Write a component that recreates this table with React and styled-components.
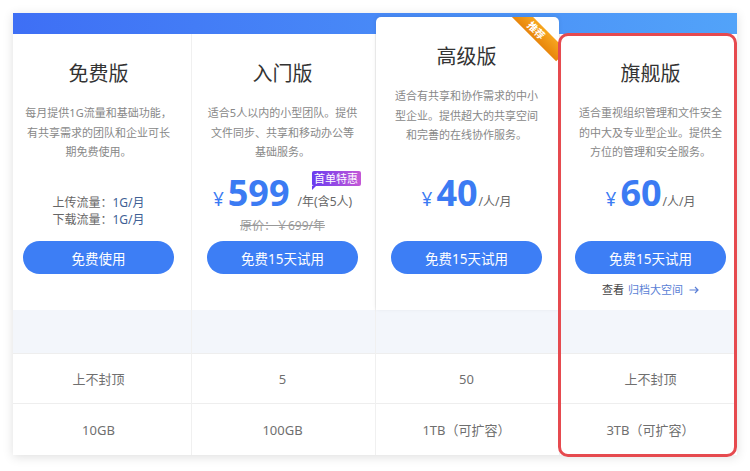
import React from "react";
import styled, { createGlobalStyle, css } from "styled-components";

const Global = createGlobalStyle`
  html, body { margin: 0; padding: 0; background: #fff; }
  body { font-family: "Noto Sans", "Noto Sans CJK SC", sans-serif; }
  * { box-sizing: border-box; }
`;

const Page = styled.div`
  padding: 13px;
`;

const Card = styled.div`
  width: 724px;
  background: #fff;
  box-shadow: 0 2px 10px rgba(0, 0, 0, 0.13);
`;

const TopBar = styled.div`
  height: 21px;
  background: linear-gradient(90deg, #3e6ff5, #52a3f9);
`;

const Grid = styled.div`
  display: grid;
  grid-template-columns: 178px 184px 184px 178px;
`;

const Column = styled.div`
  --pl: ${(p) => p.$pl}px;
  --pr: ${(p) => p.$pr}px;
  display: flex;
  flex-direction: column;
  position: relative;
  & + & {
    border-left: 1px solid #f0f0f0;
  }
  ${(p) =>
    p.$highlight &&
    css`
      &::after {
        content: "";
        position: absolute;
        top: -1px;
        left: -2px;
        right: 0;
        bottom: -2px;
        border: 3px solid #e64a4f;
        border-radius: 10px;
        pointer-events: none;
        z-index: 3;
      }
    `}
`;

const Head = styled.div`
  position: relative;
  display: flex;
  flex-direction: column;
  align-items: center;
  height: ${(p) => (p.$raised ? 293 : 276)}px;
  padding: 26px var(--pr) 0 var(--pl);
  background: #fff;
  ${(p) =>
    p.$raised &&
    css`
      margin-top: -17px;
      z-index: 2;
      border-radius: 5px 5px 0 0;
      overflow: hidden;
      box-shadow: 0 -1px 4px rgba(0, 0, 0, 0.08);
    `}
`;

const Ribbon = styled.div`
  position: absolute;
  top: 6px;
  right: -13px;
  width: 72px;
  height: 15px;
  transform: rotate(45deg);
  background: linear-gradient(180deg, #f7a51f, #e8860c);
  color: #fff;
  font-size: 10px;
  font-weight: 700;
  line-height: 15px;
  text-align: center;
`;

const Title = styled.h3`
  margin: 0;
  font-size: 20px;
  line-height: 28px;
  font-weight: 400;
  color: #333;
`;

const Desc = styled.p`
  margin: 15px 0 0;
  font-size: 11px;
  line-height: 19.5px;
  color: #888;
  text-align: center;
  white-space: nowrap;
`;

const PriceArea = styled.div`
  margin-top: auto;
  width: 100%;
  height: 76px;
  display: flex;
  flex-direction: column;
  align-items: center;
  padding-top: ${(p) => p.$top}px;
`;

const Traffic = styled.div`
  font-size: 12px;
  line-height: 17px;
  color: #666;
`;

const TrafficValue = styled.span`
  color: #3f5f95;
`;

const PriceRow = styled.div`
  display: flex;
  align-items: baseline;
`;

const Currency = styled.span`
  font-size: 19px;
  color: #3b7bf3;
  margin-right: 4px;
`;

const Amount = styled.span`
  font-size: 36px;
  line-height: 36px;
  font-weight: 700;
  color: #3b7bf3;
`;

const Unit = styled.span`
  position: relative;
  font-size: 12px;
  line-height: 16px;
  color: #666;
  margin-left: ${(p) => p.$gap}px;
`;

const Badge = styled.span`
  position: absolute;
  left: 14px;
  bottom: calc(100% + 8px);
  width: 49px;
  height: 15px;
  border-radius: 2px;
  background: linear-gradient(90deg, #6a3cf0, #c457d6);
  color: #fff;
  font-size: 11px;
  line-height: 15px;
  text-align: center;
  white-space: nowrap;
  &::after {
    content: "";
    position: absolute;
    left: 0;
    top: 100%;
    border-top: 4px solid #6a3cf0;
    border-right: 4px solid transparent;
  }
`;

const Original = styled.div`
  margin-top: 6px;
  font-size: 12px;
  line-height: 16px;
  color: #999;
  text-decoration: line-through;
`;

const Button = styled.button`
  flex-shrink: 0;
  width: 100%;
  height: 33px;
  border: none;
  border-radius: 17px;
  background: #3d7ef5;
  color: #fff;
  font-family: inherit;
  font-size: 13.5px;
  cursor: pointer;
`;

const Extra = styled.div`
  flex-shrink: 0;
  height: 36px;
  padding-top: 8px;
  font-size: 11px;
  line-height: 16px;
  color: #444;
  display: flex;
  justify-content: center;
  align-items: flex-start;
  gap: 4px;
`;

const LinkText = styled.span`
  color: #5b7fd6;
  display: inline-flex;
  align-items: center;
  gap: 6px;
`;

const Band = styled.div`
  height: 43px;
  background: #f3f6fb;
`;

const Cell = styled.div`
  height: ${(p) => p.$h}px;
  border-top: 1px solid #eee;
  padding: 0 var(--pr) 0 var(--pl);
  display: flex;
  align-items: center;
  justify-content: center;
  font-size: 13px;
  color: #6f6f6f;
`;

const Arrow = () => (
  <svg width="10" height="8" viewBox="0 0 10 8" fill="none" stroke="#5b7fd6" strokeWidth="1.2">
    <path d="M0.5 4h8.5M6 1l3 3-3 3" />
  </svg>
);

const plans = [
  {
    pl: 10,
    pr: 17,
    title: "免费版",
    desc: ["每月提供1G流量和基础功能，", "有共享需求的团队和企业可长", "期免费使用。"],
    kind: "traffic",
    button: "免费使用",
    rows: ["上不封顶", "10GB"],
  },
  {
    pl: 15,
    pr: 17,
    title: "入门版",
    desc: ["适合5人以内的小型团队。提供", "文件同步、共享和移动办公等", "基础服务。"],
    kind: "price",
    amount: "599",
    unit: "/年(含5人)",
    gap: 8,
    badge: "首单特惠",
    original: "原价：￥699/年",
    button: "免费15天试用",
    rows: ["5", "100GB"],
  },
  {
    pl: 15,
    pr: 17,
    raised: true,
    title: "高级版",
    desc: ["适合有共享和协作需求的中小", "型企业。提供超大的共享空间", "和完善的在线协作服务。"],
    kind: "price",
    amount: "40",
    unit: "/人/月",
    gap: 1,
    button: "免费15天试用",
    rows: ["50", "1TB（可扩容）"],
  },
  {
    pl: 15,
    pr: 11,
    highlight: true,
    title: "旗舰版",
    desc: ["适合重视组织管理和文件安全", "的中大及专业型企业。提供全", "方位的管理和安全服务。"],
    kind: "price",
    amount: "60",
    unit: "/人/月",
    gap: 1,
    button: "免费15天试用",
    link: true,
    rows: ["上不封顶", "3TB（可扩容）"],
  },
];

export default function App() {
  return (
    <>
      <Global />
      <Page>
        <Card>
          <TopBar />
          <Grid>
            {plans.map((p) => (
              <Column key={p.title} $pl={p.pl} $pr={p.pr} $highlight={p.highlight}>
                <Head $raised={p.raised}>
                  {p.raised && <Ribbon>推荐</Ribbon>}
                  <Title>{p.title}</Title>
                  <Desc>
                    {p.desc.map((line, i) => (
                      <React.Fragment key={i}>
                        {line}
                        {i < p.desc.length - 1 && <br />}
                      </React.Fragment>
                    ))}
                  </Desc>
                  {p.kind === "traffic" ? (
                    <PriceArea $top={29}>
                      <Traffic>
                        上传流量：<TrafficValue>1G/月</TrafficValue>
                      </Traffic>
                      <Traffic>
                        下载流量：<TrafficValue>1G/月</TrafficValue>
                      </Traffic>
                    </PriceArea>
                  ) : (
                    <PriceArea $top={10}>
                      <PriceRow>
                        <Currency>¥</Currency>
                        <Amount>{p.amount}</Amount>
                        <Unit $gap={p.gap}>
                          {p.unit}
                          {p.badge && <Badge>{p.badge}</Badge>}
                        </Unit>
                      </PriceRow>
                      {p.original && <Original>{p.original}</Original>}
                    </PriceArea>
                  )}
                  <Button>{p.button}</Button>
                  <Extra>
                    {p.link && (
                      <>
                        <span>查看</span>
                        <LinkText>
                          归档大空间
                          <Arrow />
                        </LinkText>
                      </>
                    )}
                  </Extra>
                </Head>
                <Band />
                <Cell $h={50}>{p.rows[0]}</Cell>
                <Cell $h={52}>{p.rows[1]}</Cell>
              </Column>
            ))}
          </Grid>
        </Card>
      </Page>
    </>
  );
}
